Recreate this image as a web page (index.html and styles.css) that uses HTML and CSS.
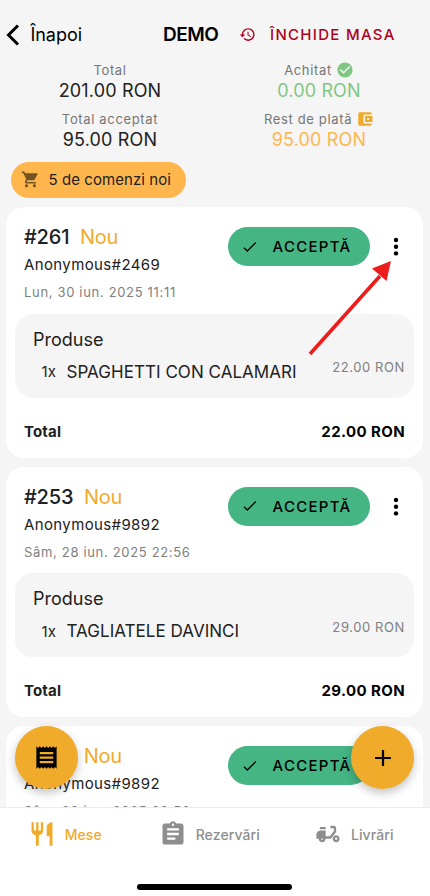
FILE: index.html
```html
<!DOCTYPE html>
<html lang="ro">
<head>
<meta charset="utf-8">
<meta name="viewport" content="width=device-width, initial-scale=1">
<title>DEMO</title>
<link rel="stylesheet" href="styles.css">
</head>
<body>
<svg class="defs" aria-hidden="true">
  <symbol id="check" viewBox="0 0 14 12"><path d="M1 6.7 4.3 10 12.9 1.4" fill="none" stroke="currentColor" stroke-width="1.3"/></symbol>
  <symbol id="dots" viewBox="0 0 6 20"><circle cx="3" cy="3" r="2.2"/><circle cx="3" cy="9.7" r="2.2"/><circle cx="3" cy="16.4" r="2.2"/></symbol>
</svg>
<div class="app">
  <header class="topbar">
    <a class="back"><svg class="chevron" viewBox="0 0 14 22"><path d="M12 1.5 2.5 11 12 20.5"/></svg><span>Înapoi</span></a>
    <h1 class="title">DEMO</h1>
    <a class="close-table">
      <svg class="history" viewBox="0 0 24 24"><path d="M13 3c-4.97 0-9 4.03-9 9H1l3.89 3.89.07.14L9 12H6c0-3.87 3.13-7 7-7s7 3.13 7 7-3.13 7-7 7c-1.93 0-3.68-.79-4.94-2.06l-1.42 1.42C8.27 19.99 10.51 21 13 21c4.97 0 9-4.03 9-9s-4.03-9-9-9zm-1 5v5l4.28 2.54.72-1.21-3.5-2.08V8H12z"/></svg>
      <span>ÎNCHIDE MASA</span>
    </a>
  </header>

  <section class="summary">
    <div class="stat"><div class="label">Total</div><div class="amount">201.00 RON</div></div>
    <div class="stat"><div class="label">Achitat <svg class="label-icon green" viewBox="0 0 24 24"><path d="M12 2C6.48 2 2 6.48 2 12s4.48 10 10 10 10-4.48 10-10S17.52 2 12 2zm-2 15-5-5 1.41-1.41L10 14.17l7.59-7.59L19 8l-9 9z"/></svg></div><div class="amount green">0.00 RON</div></div>
    <div class="stat"><div class="label">Total acceptat</div><div class="amount">95.00 RON</div></div>
    <div class="stat"><div class="label">Rest de plată <svg class="label-icon gold" viewBox="0 0 24 24"><path d="M21 18v1c0 1.1-.9 2-2 2H5c-1.11 0-2-.9-2-2V5c0-1.1.89-2 2-2h14c1.1 0 2 .9 2 2v1h-9c-1.11 0-2 .9-2 2v8c0 1.1.89 2 2 2h9zm-9-2h10V8H12v8zm4-2.5c-.83 0-1.5-.67-1.5-1.5s.67-1.5 1.5-1.5 1.5.67 1.5 1.5-.67 1.5-1.5 1.5z"/></svg></div><div class="amount orange">95.00 RON</div></div>
  </section>

  <div class="chip">
    <svg class="cart" viewBox="0 0 24 24"><path d="M7 18c-1.1 0-1.99.9-1.99 2S5.9 22 7 22s2-.9 2-2-.9-2-2-2zM1 2v2h2l3.6 7.59-1.35 2.45c-.16.28-.25.61-.25.96 0 1.1.9 2 2 2h12v-2H7.42c-.14 0-.25-.11-.25-.25l.03-.12.9-1.63h7.45c.75 0 1.41-.41 1.75-1.03l3.58-6.49A1 1 0 0 0 20 4H5.21l-.94-2H1zm16 16c-1.1 0-1.99.9-1.99 2s.89 2 1.99 2 2-.9 2-2-.9-2-2-2z"/></svg>
    <span>5 de comenzi noi</span>
  </div>

  <main class="orders">
    <article class="card">
      <div class="card-head">
        <div class="who">
          <div class="order"><span class="number">#261</span><span class="status">Nou</span></div>
          <div class="name">Anonymous#2469</div>
          <div class="date">Lun, 30 iun. 2025 11:11</div>
        </div>
        <button class="accept"><svg class="check"><use href="#check"/></svg><span>ACCEPTĂ</span></button>
        <svg class="dots"><use href="#dots"/></svg>
      </div>
      <div class="products">
        <div class="products-title">Produse</div>
        <div class="item"><span class="qty">1x</span><span class="product">SPAGHETTI CON CALAMARI</span><span class="price">22.00 RON</span></div>
      </div>
      <div class="total"><span>Total</span><span class="total-amount">22.00 RON</span></div>
    </article>
    <article class="card">
      <div class="card-head">
        <div class="who">
          <div class="order"><span class="number">#253</span><span class="status">Nou</span></div>
          <div class="name">Anonymous#9892</div>
          <div class="date">Sâm, 28 iun. 2025 22:56</div>
        </div>
        <button class="accept"><svg class="check"><use href="#check"/></svg><span>ACCEPTĂ</span></button>
        <svg class="dots"><use href="#dots"/></svg>
      </div>
      <div class="products">
        <div class="products-title">Produse</div>
        <div class="item"><span class="qty">1x</span><span class="product">TAGLIATELE DAVINCI</span><span class="price">29.00 RON</span></div>
      </div>
      <div class="total"><span>Total</span><span class="total-amount">29.00 RON</span></div>
    </article>
    <article class="card">
      <div class="card-head">
        <div class="who">
          <div class="order"><span class="number">#252</span><span class="status">Nou</span></div>
          <div class="name">Anonymous#9892</div>
          <div class="date">Sâm, 28 iun. 2025 22:56</div>
        </div>
        <button class="accept"><svg class="check"><use href="#check"/></svg><span>ACCEPTĂ</span></button>
      </div>
    </article>
  </main>

  <nav class="tabs">
    <a class="tab active"><svg viewBox="0 0 24 24"><path d="M11 9H9V2H7v7H5V2H3v7c0 2.12 1.66 3.84 3.75 3.97V22h2.5v-9.03C11.34 12.84 13 11.12 13 9V2h-2v7zm5-3v8h2.5v8H21V2c-2.76 0-5 2.24-5 4z"/></svg><span>Mese</span></a>
    <a class="tab"><svg viewBox="0 0 24 24"><path d="M19 3h-4.18C14.4 1.84 13.3 1 12 1c-1.3 0-2.4.84-2.82 2H5c-1.1 0-2 .9-2 2v14c0 1.1.9 2 2 2h14c1.1 0 2-.9 2-2V5c0-1.1-.9-2-2-2zm-7 0c.55 0 1 .45 1 1s-.45 1-1 1-1-.45-1-1 .45-1 1-1zm2 14H7v-2h7v2zm3-4H7v-2h10v2zm0-4H7V7h10v2z"/></svg><span>Rezervări</span></a>
    <a class="tab"><svg viewBox="0 0 24 24"><path d="M19 15c.55 0 1 .45 1 1s-.45 1-1 1-1-.45-1-1 .45-1 1-1m0-2c-1.66 0-3 1.34-3 3s1.34 3 3 3 3-1.34 3-3-1.34-3-3-3M10 6H5v2h5V6m7-1h-3v2h3v2.65L13.5 14H10V9H6c-2.21 0-4 1.79-4 4v3h2c0 1.66 1.34 3 3 3s3-1.34 3-3h4.5l4.5-5.65V7c0-1.11-.89-2-2-2M7 17c-.55 0-1-.45-1-1h2c0 .55-.45 1-1 1z"/></svg><span>Livrări</span></a>
  </nav>
  <div class="home-indicator"></div>

  <button class="fab fab-left"><svg class="receipt" viewBox="0 0 24 24"><path d="M18 17H6v-2h12v2zm0-4H6v-2h12v2zm0-4H6V7h12v2zM3 22l1.5-1.5L6 22l1.5-1.5L9 22l1.5-1.5L12 22l1.5-1.5L15 22l1.5-1.5L18 22l1.5-1.5L21 22V2l-1.5 1.5L18 2l-1.5 1.5L15 2l-1.5 1.5L12 2l-1.5 1.5L9 2 7.5 3.5 6 2 4.5 3.5 3 2v20z"/></svg></button>
  <button class="fab fab-right"><svg class="plus" viewBox="0 0 16 16"><path d="M8 0v16M0 8h16"/></svg></button>
  <svg class="arrow" viewBox="0 0 90 100"><path class="shaft" d="M5 94 75 16"/><path d="M86 1 67 8.500 81.500 21z"/></svg>
</div>
</body>
</html>
```

FILE: styles.css
```css
* { box-sizing: border-box; }
body { margin: 0; background: #f5f5f5; font-family: Inter, "Liberation Sans", sans-serif; color: #212121; }
h1 { margin: 0; }
svg { flex: none; fill: currentColor; }
button { border: 0; padding: 0; font: inherit; }
.defs { display: none; }
.app { position: relative; width: 430px; height: 896px; overflow: hidden; display: flex; flex-direction: column; white-space: nowrap; }

.topbar { height: 60px; padding: 9px 0 0 6px; display: flex; align-items: center; color: #000; }
.back { display: flex; align-items: center; gap: 10.500px; width: 157px; font-size: 18px; letter-spacing: -.05px; }
.chevron { width: 14px; height: 22px; fill: none; stroke: #000; stroke-width: 3; }
.title { width: 76px; font-size: 19px; font-weight: 600; letter-spacing: -.5px; }
.close-table { display: flex; align-items: center; gap: 14px; color: #b00020; font-size: 15px; font-weight: 500; letter-spacing: 1.3px; }
.history { width: 17px; height: 17px; }

.summary { display: grid; grid-template-columns: 212px 206px; row-gap: 5px; padding-left: 4px; height: 101.500px; align-content: start; }
.stat { text-align: center; }
.label { display: flex; justify-content: center; align-items: center; gap: 4px; height: 20px; font-size: 13px; letter-spacing: .65px; color: #757575; }
.label-icon { width: 18px; height: 18px; }
.amount { height: 22px; line-height: 22px; font-size: 18px; letter-spacing: .15px; margin-bottom: 2px; }
.green { color: #81c784; }
.orange { color: #ffb74d; }
.gold { color: #f0ab2b; }

.chip { display: flex; align-items: center; gap: 9px; width: 175px; height: 36.500px; flex: none; margin-left: 10.500px; padding-left: 10px; border-radius: 19px; background: #ffb74d; font-size: 15px; letter-spacing: .07px; }
.cart { width: 19px; height: 19px; color: #745323; }

.orders { margin-top: 9px; height: 600px; flex: none; overflow: hidden; padding: 0 7px 0 6px; display: flex; flex-direction: column; gap: 9px; }
.card { height: 250.500px; flex: none; padding: 0 9px; border-radius: 18px; background: #fff; }
.card-head { height: 106.800px; display: flex; align-items: flex-start; padding: 19px 0 0 9px; }
.who { width: 203.500px; }
.order { display: flex; gap: 10.500px; height: 23px; line-height: 23px; font-size: 20px; }
.number { font-weight: 500; letter-spacing: -.15px; }
.status { color: #f0ab2b; letter-spacing: -.2px; }
.name { height: 32px; line-height: 32px; font-size: 15px; letter-spacing: .37px; }
.date { height: 22px; line-height: 22px; font-size: 13px; letter-spacing: .67px; color: #808080; }
.accept { display: flex; align-items: center; width: 142px; height: 39px; margin-top: 1px; padding-left: 15.500px; gap: 15.500px; border-radius: 20px; background: #45b584; color: #000; font-size: 15px; font-weight: 500; letter-spacing: 1.3px; }
.check { width: 14px; height: 12px; }
.dots { width: 6px; height: 20px; margin: 11px 0 0 23.500px; color: #000; }

.products { height: 84px; padding: 12px 9px 0 18px; border-radius: 18px; background: #f5f5f5; }
.products-title { height: 27px; line-height: 27px; font-size: 18px; letter-spacing: .02px; }
.item { display: flex; align-items: center; height: 38px; padding-left: 8.500px; font-size: 17px; }
.qty { width: 25px; font-size: 15px; letter-spacing: .2px; }
.product { letter-spacing: .04px; }
.price { margin: 0 0 9px auto; font-size: 13px; letter-spacing: .6px; color: #808080; }
.total { display: flex; justify-content: space-between; padding: 24.200px 9px 0; line-height: 20px; font-size: 15px; font-weight: 700; letter-spacing: .15px; }
.total-amount { color: #000; letter-spacing: .4px; }

.tabs { height: 60px; flex: none; display: flex; padding-top: 6px; background: #fff; border-top: 1px solid #ececec; color: #8e8e8e; font-size: 14px; font-weight: 500; letter-spacing: .1px; }
.tab { display: flex; align-items: center; justify-content: center; gap: 8.500px; height: 40px; flex: none; width: 130px; }
.tab:nth-child(2) { width: 159px; }
.tab svg { width: 28px; height: 28px; }
.active { color: #f0ab2b; }
.home-indicator { flex: 1; background: #fff; display: flex; padding: 17px 0 0 137px; }
.home-indicator::before { content: ""; width: 155px; height: 6px; border-radius: 3px; background: #000; }

.fab { position: absolute; top: 726px; width: 63px; height: 63px; border-radius: 50%; display: flex; align-items: center; justify-content: center; background: #f0ab2b; color: #000; box-shadow: 0 4px 10px rgba(0,0,0,.24); }
.fab-left { left: 15px; }
.fab-right { left: 351px; }
.receipt { width: 27px; height: 27px; }
.plus { width: 16px; height: 16px; stroke: #000; stroke-width: 2.200; }
.arrow { position: absolute; left: 305px; top: 260px; width: 90px; height: 100px; color: #ed1c1c; }
.shaft { fill: none; stroke: #ed1c1c; stroke-width: 3.600; }
```
